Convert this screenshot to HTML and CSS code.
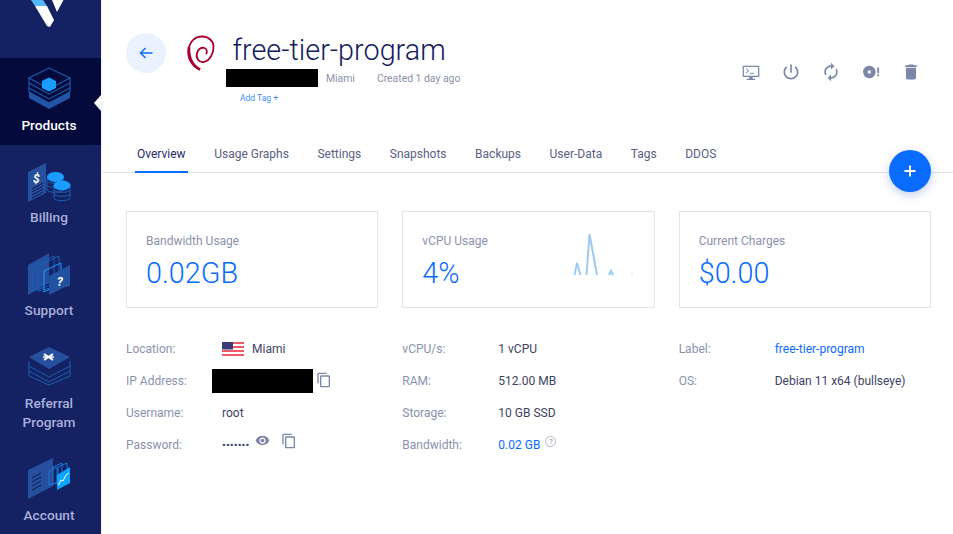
FILE: index.html
```html
<!DOCTYPE html>
<html lang="en">
<head>
<meta charset="utf-8">
<title>free-tier-program</title>
<link rel="stylesheet" href="styles.css">
</head>
<body>
<div class="app">
  <nav class="sidebar">
    <div class="logo">
      <svg width="102" height="58" viewBox="0 0 102 58">
        <polygon points="31,0 43,0 47,6 35,6" fill="#51b9ff"/>
        <polygon points="35,6 47,6 54,20 50,27 47,26" fill="#fff"/>
        <polygon points="52,0 63.500,0 57,12" fill="#fff"/>
      </svg>
    </div>
    <a class="nav-item active">
      <svg class="nav-icon" viewBox="14 66 70 46">
        <polygon points="29,92 49,103 70,92 70,98 49,109 29,98" fill="#2553a6"/>
        <g fill="none" stroke="#1b5fb2" stroke-width="1.100">
          <polygon points="29,78 49,68 70,78 49,89"/>
          <polyline points="29,78 29,92 49,103 70,92 70,78"/>
          <polyline points="29,83 49,94 70,83"/>
          <polyline points="29,88 49,99 70,88"/>
        </g>
        <path d="M42 81l7-3.500 7 3.500v7l-7 3.500-7-3.500z" fill="#1b9dff"/>
      </svg>
      <span>Products</span>
    </a>
    <a class="nav-item">
      <svg class="nav-icon" viewBox="14 158 70 46">
        <polygon points="28,171 46,162 46,192 28,201" fill="#264f9e"/>
        <text x="33" y="182" class="glyph">$</text>
        <g stroke="#0f1a4d" stroke-width="1">
          <line x1="32" y1="188" x2="43" y2="182"/>
          <line x1="32" y1="191" x2="43" y2="185"/>
          <line x1="32" y1="194" x2="43" y2="188"/>
          <line x1="32" y1="197" x2="43" y2="191"/>
        </g>
        <g fill="none" stroke="#1b5fb2" stroke-width="1">
          <path d="M47 176v13c0 3 16 3 16 0v-13"/>
          <path d="M47 180c0 3 16 3 16 0M47 184c0 3 16 3 16 0"/>
          <path d="M54 185v12c0 3.500 16 3.500 16 0v-12"/>
          <path d="M54 189c0 3 16 3 16 0M54 193c0 3 16 3 16 0"/>
        </g>
        <ellipse cx="55.500" cy="176" rx="8.500" ry="5" fill="#1b9dff"/>
        <ellipse cx="62" cy="184.500" rx="8.500" ry="5" fill="#1b9dff"/>
      </svg>
      <span>Billing</span>
    </a>
    <a class="nav-item">
      <svg class="nav-icon" viewBox="14 252 70 46">
        <polygon points="28,265 49,253 49,283 28,295" fill="#264f9e"/>
        <g fill="none" stroke="#1b5fb2" stroke-width="1">
          <polygon points="33,266 54,256 54,284 33,291"/>
          <polygon points="38,266 59,256 59,286 38,291"/>
        </g>
        <polygon points="44,271 61,263 61,282 44,292" fill="none" stroke="#1b9dff" stroke-width="1"/>
        <polygon points="49,276 70,265 70,286 65,287 49,295" fill="#22519f"/>
        <text x="57" y="286" class="glyph">?</text>
      </svg>
      <span>Support</span>
    </a>
    <a class="nav-item">
      <svg class="nav-icon" viewBox="14 345 70 46">
        <g fill="none" stroke="#1b5fb2" stroke-width="1">
          <polyline points="29,367 49,378 70,367"/>
          <polyline points="29,362 29,372 49,383 70,372 70,362"/>
          <polyline points="29,372 29,377 49,386 70,377 70,372"/>
        </g>
        <polygon points="29,358 49,348 70,358 49,370" fill="#264f9e"/>
        <path d="M44 355l9 6M53 355l-9 6" stroke="#fff" stroke-width="2"/>
        <path d="M43 358h11" stroke="#fff" stroke-width="1.500"/>
      </svg>
      <span>Referral<br>Program</span>
    </a>
    <a class="nav-item">
      <svg class="nav-icon" viewBox="14 457 70 46">
        <polygon points="28,471 53,459 53,487 28,500" fill="#264f9e"/>
        <g stroke="#0f1a4d" stroke-width="1">
          <line x1="32" y1="479" x2="41" y2="474"/>
          <line x1="32" y1="483" x2="41" y2="478"/>
          <line x1="32" y1="487" x2="41" y2="482"/>
          <line x1="32" y1="491" x2="41" y2="486"/>
        </g>
        <g fill="none" stroke="#1b79d4" stroke-width="1">
          <polygon points="49,472 57,468 57,484 49,486"/>
          <polygon points="53,468 62,464 62,482 53,485"/>
          <polygon points="58,468 67,464 67,482 58,485"/>
        </g>
        <polygon points="57,476 70,468 70,484 57,491" fill="#0ea5ff"/>
        <polyline points="58.500,486 61,481 63,482 66,476 69,474" fill="none" stroke="#fff" stroke-width="1"/>
      </svg>
      <span>Account</span>
    </a>
  </nav>

  <main class="content">
    <header class="header">
      <button class="back" aria-label="Back">
        <svg width="16" height="16" viewBox="0 0 16 16"><path d="M14.500 8H2.500M7.500 3L2.500 8l5 5" fill="none" stroke="#0a6cff" stroke-width="1.500"/></svg>
      </button>
      <svg class="os-logo" width="30" height="38" viewBox="186 34 30 38">
        <path d="M200 69.500C192 66 187.500 59 188.500 50.500C189.500 41 195.500 36.500 202 36.500C208.500 36.500 213 40.500 213.500 46C214 53 210 60.500 204 62C199 63 195.500 58 197 53C198 49.500 201 47 204.500 48C207 49 207.500 52 206 54" fill="none" stroke="#a80030" stroke-width="1.800"/>
        <path d="M189 47C188 58 193 66 200 69.500" fill="none" stroke="#a80030" stroke-width="2.800"/>
      </svg>
      <div class="title-block">
        <h1>free-tier-program</h1>
        <div class="meta">
          <span class="redact redact-name"></span>
          <span class="meta-city">Miami</span>
          <span class="meta-created">Created 1 day ago</span>
        </div>
        <a class="add-tag">Add Tag +</a>
      </div>
      <div class="actions">
        <svg class="act" viewBox="0 0 24 24">
          <path d="M3 4.500h18a1 1 0 0 1 1 1V17a1 1 0 0 1-1 1H3a1 1 0 0 1-1-1V5.500a1 1 0 0 1 1-1zM3.500 6v10.500h17V6z" fill-rule="evenodd"/>
          <path d="M10 18h4v2h3v1.500H7V20h3z"/>
          <path d="M6 8l3.500 2.500L6 13" fill="none" stroke="#7c86a8" stroke-width="1.200"/>
          <rect x="10.500" y="13" width="5" height="1.200"/>
        </svg>
        <svg class="act" viewBox="0 0 24 24"><path d="M13 3h-2v10h2V3zm4.830 2.170l-1.420 1.420C17.990 7.860 19 9.810 19 12c0 3.870-3.130 7-7 7s-7-3.130-7-7c0-2.190 1.010-4.140 2.580-5.420L6.170 5.170C4.230 6.820 3 9.260 3 12c0 4.970 4.030 9 9 9s9-4.030 9-9c0-2.740-1.230-5.180-3.170-6.830z"/></svg>
        <svg class="act" viewBox="0 0 24 24"><path d="M12 6v3l4-4-4-4v3c-4.420 0-8 3.580-8 8 0 1.570.46 3.030 1.240 4.260L6.700 14.800c-.45-.83-.7-1.790-.7-2.800 0-3.310 2.690-6 6-6zm6.760 1.740L17.300 9.200c.44.84.7 1.790.7 2.800 0 3.310-2.690 6-6 6v-3l-4 4 4 4v-3c4.420 0 8-3.580 8-8 0-1.570-.46-3.030-1.240-4.260z"/></svg>
        <svg class="act" viewBox="0 0 24 24">
          <path d="M10 4.500a7.500 7.500 0 1 0 0 15 7.500 7.500 0 0 0 0-15zm0 5.500a2 2 0 1 1 0 4 2 2 0 0 1 0-4z" fill-rule="evenodd"/>
          <rect x="19.500" y="6.500" width="2.200" height="7"/><rect x="19.500" y="15" width="2.200" height="2.200"/>
        </svg>
        <svg class="act" viewBox="0 0 24 24"><path d="M6 19c0 1.100.9 2 2 2h8c1.100 0 2-.9 2-2V7H6v12zM19 4h-3.500l-1-1h-5l-1 1H5v2h14V4z"/></svg>
      </div>
    </header>

    <div class="tabs">
      <a class="tab active">Overview</a>
      <a class="tab">Usage Graphs</a>
      <a class="tab">Settings</a>
      <a class="tab">Snapshots</a>
      <a class="tab">Backups</a>
      <a class="tab">User-Data</a>
      <a class="tab">Tags</a>
      <a class="tab">DDOS</a>
    </div>
    <button class="fab" aria-label="Add">
      <svg width="12" height="12" viewBox="0 0 12 12"><path d="M6 .5v11M.5 6h11" stroke="#fff" stroke-width="2"/></svg>
    </button>

    <section class="cards">
      <div class="card">
        <div>
          <div class="card-label">Bandwidth Usage</div>
          <div class="card-value">0.02GB</div>
        </div>
      </div>
      <div class="card">
        <div>
          <div class="card-label">vCPU Usage</div>
          <div class="card-value">4%</div>
        </div>
        <svg class="spark" width="62" height="44" viewBox="574 232 62 44">
          <g fill="none" stroke="#9ccbf2" stroke-width="2">
            <polyline points="575.500,274 578,262 581.500,274"/>
            <polyline points="587.500,274 590.500,233 598,274"/>
            <polyline points="610,274 612,270 614,274"/>
          </g>
          <rect x="632.500" y="272.500" width="1" height="1" fill="#93c8f3"/>
        </svg>
      </div>
      <div class="card">
        <div>
          <div class="card-label">Current Charges</div>
          <div class="card-value">$0.00</div>
        </div>
      </div>
    </section>

    <section class="details">
      <dl class="col">
        <div class="row"><dt>Location:</dt><dd>
          <svg class="flag" width="22" height="14" viewBox="0 0 22 14">
            <rect width="22" height="14" fill="#fff"/>
            <g fill="#ef5a66"><rect width="22" height="2"/><rect y="4" width="22" height="2"/><rect y="8" width="22" height="2"/><rect y="12" width="22" height="2"/></g>
            <rect width="11" height="7.500" fill="#3a3d78"/>
          </svg>
          <span>Miami</span></dd></div>
        <div class="row"><dt>IP Address:</dt><dd class="ip">
          <span class="redact redact-ip"></span>
          <svg class="ico copy" viewBox="0 0 24 24"><path d="M16 1H4c-1.100 0-2 .9-2 2v14h2V3h12V1zm3 4H8c-1.100 0-2 .9-2 2v14c0 1.100.9 2 2 2h11c1.100 0 2-.9 2-2V7c0-1.100-.9-2-2-2zm0 16H8V7h11v14z"/></svg>
        </dd></div>
        <div class="row"><dt>Username:</dt><dd>root</dd></div>
        <div class="row"><dt>Password:</dt><dd class="pass">
          <span class="dots">•••••••</span>
          <svg class="ico eye" viewBox="0 0 24 24"><path d="M12 4.500C7 4.500 2.730 7.610 1 12c1.730 4.390 6 7.500 11 7.500s9.270-3.110 11-7.500c-1.730-4.390-6-7.500-11-7.500zM12 17c-2.760 0-5-2.240-5-5s2.240-5 5-5 5 2.240 5 5-2.240 5-5 5zm0-8c-1.660 0-3 1.340-3 3s1.340 3 3 3 3-1.340 3-3-1.340-3-3-3z"/></svg>
          <svg class="ico copy" viewBox="0 0 24 24"><path d="M16 1H4c-1.100 0-2 .9-2 2v14h2V3h12V1zm3 4H8c-1.100 0-2 .9-2 2v14c0 1.100.9 2 2 2h11c1.100 0 2-.9 2-2V7c0-1.100-.9-2-2-2zm0 16H8V7h11v14z"/></svg>
        </dd></div>
      </dl>
      <dl class="col">
        <div class="row"><dt>vCPU/s:</dt><dd>1 vCPU</dd></div>
        <div class="row"><dt>RAM:</dt><dd>512.00 MB</dd></div>
        <div class="row"><dt>Storage:</dt><dd>10 GB SSD</dd></div>
        <div class="row"><dt>Bandwidth:</dt><dd><a class="link">0.02 GB</a><span class="help">?</span></dd></div>
      </dl>
      <dl class="col">
        <div class="row"><dt>Label:</dt><dd><a class="link">free-tier-program</a></dd></div>
        <div class="row"><dt>OS:</dt><dd>Debian 11 x64 (bullseye)</dd></div>
      </dl>
    </section>
  </main>
</div>
</body>
</html>
```

FILE: styles.css
```css
* { box-sizing: border-box; }
html, body { margin: 0; height: 100%; overflow: hidden; }
body { font-family: Roboto, "Liberation Sans", sans-serif; background: #fff; color: #3c4263; }
.app { display: flex; height: 534px; }

.sidebar { width: 102px; flex: none; background: #142163; border-right: 1px solid #f2f2f4; display: flex; flex-direction: column; gap: 5.8px; overflow: hidden; }
.logo { height: 58px; margin-bottom: -5.8px; flex: none; }
.logo svg { display: block; }
.nav-item { position: relative; display: flex; flex-direction: column; align-items: center; padding: 8px 3px 10.5px 0; color: #a9b0d9; font-size: 13.7px; font-weight: 500; line-height: 19px; text-align: center; flex: none; }
.nav-item.active { background: #040a3b; color: #fff; }
.nav-item.active::after { content: ""; position: absolute; right: 0; top: 37px; border-style: solid; border-width: 8px 7px 8px 0; border-color: transparent #fff transparent transparent; }
.nav-icon { display: block; width: 70px; height: 46px; margin-bottom: 3.500px; }
.glyph { font-family: Roboto, sans-serif; font-size: 12px; font-weight: 700; font-style: italic; fill: #fff; }

.content { position: relative; flex: 1; min-width: 0; }

.header { display: flex; align-items: flex-start; height: 134px; padding: 33px 32px 0 24px; }
.back { width: 40px; height: 40px; margin-top: 0; border: 0; border-radius: 50%; background: #ebf2ff; display: flex; align-items: center; justify-content: center; padding: 0; flex: none; }
.os-logo { margin: 1px 0 0 20px; flex: none; }
.title-block { margin-left: 10px; }
h1 { margin: 0; padding-left: 6.500px; font-size: 28.800px; line-height: 34px; font-weight: 300; color: #14205c; }
.meta { display: flex; align-items: center; height: 18px; margin-top: 2px; font-size: 10.400px; color: #8b91ad; }
.redact { display: block; background: #000; }
.redact-name { width: 92px; height: 18px; }
.meta-city { margin-left: 8px; }
.meta-created { margin-left: 22px; }
.add-tag { display: block; margin: 6px 0 0 14px; font-size: 8.500px; line-height: 10px; color: #3d8bff; }

.actions { margin-left: auto; margin-top: 29px; display: flex; gap: 20px; }
.act { width: 20px; height: 20px; fill: #7c86a8; display: block; }

.tabs { display: flex; height: 39px; padding-left: 35px; border-bottom: 1px solid #e3e4ea; }
.tab { display: flex; align-items: center; height: 39px; margin-right: 28.550px; font-size: 12px; color: #5a6082; position: relative; white-space: nowrap; }
.tab.active { color: #1f2a68; }
.tab.active::after { content: ""; position: absolute; left: -2px; right: -2px; bottom: 0; height: 2px; background: #0a6cff; }

.fab { position: absolute; left: 787px; top: 150px; width: 42px; height: 42px; border: 0; border-radius: 50%; padding: 0; background: #0a6cff; box-shadow: 0 3px 10px rgba(10, 60, 160, .25); display: flex; align-items: center; justify-content: center; }

.cards { display: grid; grid-template-columns: repeat(3, 1fr); gap: 24px; margin: 38px 22px 0 24px; }
.card { display: flex; justify-content: space-between; height: 97px; padding: 21px 19px 0 19px; border: 1px solid #e5e5e8; }
.card-label { font-size: 12px; line-height: 16px; color: #8b91ad; }
.card-value { margin-top: 6px; font-size: 28.800px; line-height: 36px; font-weight: 300; color: #0a6cff; }
.spark { display: block; flex: none; }

.details { display: grid; grid-template-columns: repeat(3, 1fr); gap: 24px; margin: 25px 22px 0 24px; }
.col { margin: 0; }
.row { display: flex; align-items: center; height: 32px; font-size: 12px; }
.row dt { width: 96px; flex: none; color: #8b91ad; }
.row dd { margin: 0; display: flex; align-items: center; color: #3c4263; white-space: nowrap; }
.flag { margin-right: 8px; display: block; }
.ip { margin-left: -10px !important; }
.redact-ip { width: 101px; height: 24px; }
.ico { display: block; fill: #7c86a8; }
.copy { width: 16px; height: 16px; margin-left: 3px; margin-top: -3px; }
.eye { width: 15px; height: 15px; margin-left: 6px; margin-top: -9px; }
.pass .copy { margin-left: 11px; margin-top: -9px; }
.dots { font-size: 11.600px; letter-spacing: 0; }
.link { color: #0a6cff; }
.help { display: inline-flex; align-items: center; justify-content: center; width: 11px; height: 11px; margin: -8px 0 0 5px; border: 1px solid #b5b8c6; border-radius: 50%; font-size: 8px; color: #8b91ad; }
```
